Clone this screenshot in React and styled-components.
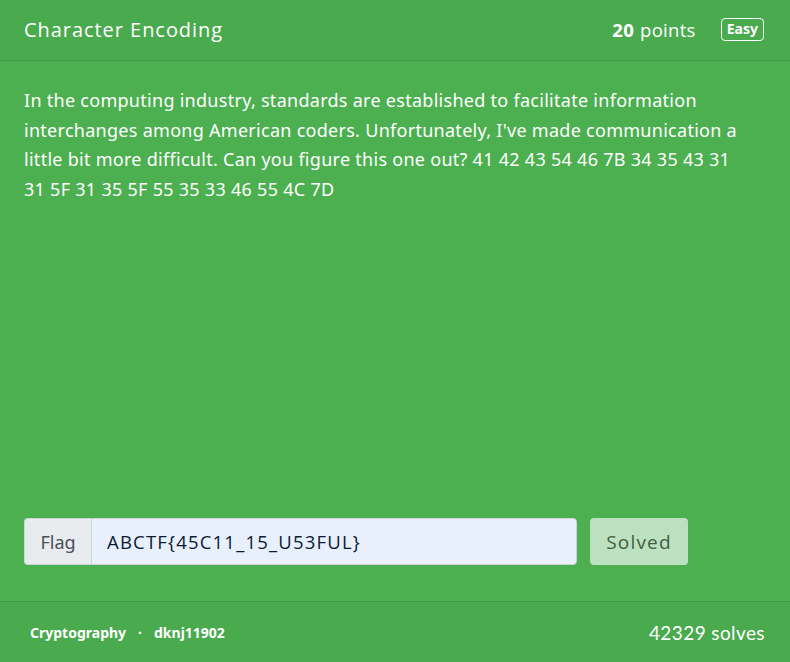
import React from "react";
import styled, { createGlobalStyle } from "styled-components";

const GlobalStyle = createGlobalStyle`
  html, body {
    margin: 0;
    padding: 0;
    background: #4caf50;
  }
  * {
    box-sizing: border-box;
  }
`;

const Card = styled.div`
  display: flex;
  flex-direction: column;
  width: 790px;
  height: 662px;
  background-color: #4caf50;
  color: #fff;
`;

const CardHeader = styled.div`
  display: flex;
  align-items: center;
  justify-content: space-between;
  height: 61px;
  padding: 0 26px 1px 24px;
  background-color: #4aaa4e;
  border-bottom: 1px solid #429a46;
`;

const Title = styled.div`
  font-family: "Open Sans", sans-serif;
  font-size: 20px;
  letter-spacing: 0.95px;
`;

const Points = styled.div`
  display: flex;
  align-items: center;
  font-family: "Open Sans", sans-serif;
  font-size: 18.5px;
  letter-spacing: 0.3px;
`;

const PointValue = styled.span`
  font-weight: 700;
  margin-right: 6px;
`;

const Badge = styled.span`
  margin-left: 25px;
  padding: 1px 5px 2px;
  border: 1px solid #fff;
  border-radius: 4px;
  font-family: "Noto Sans", sans-serif;
  font-size: 14px;
  font-weight: 700;
  line-height: 18px;
  letter-spacing: 0;
`;

const CardBody = styled.div`
  flex: 1;
  display: flex;
  flex-direction: column;
  padding: 25px 24px 36px;
`;

const Description = styled.p`
  width: 728px;
  margin: 0;
  font-family: "Noto Sans", sans-serif;
  font-size: 18px;
  line-height: 29.5px;
  letter-spacing: 0.28px;
`;

const FlagForm = styled.form`
  display: flex;
  align-items: stretch;
  margin-top: auto;
  gap: 13px;
`;

const InputGroup = styled.div`
  display: flex;
  width: 553px;
  height: 47px;
`;

const Addon = styled.span`
  display: flex;
  align-items: center;
  justify-content: center;
  width: 67px;
  background-color: #e9ecef;
  color: #495057;
  border: 1px solid #ced4da;
  border-right: none;
  border-radius: 4px 0 0 4px;
  font-family: "Noto Sans", sans-serif;
  font-size: 18px;
`;

const FlagInput = styled.input`
  flex: 1;
  min-width: 0;
  padding: 0 15px;
  background-color: #e8f0fe;
  color: #0b1a33;
  border: 1px solid #ced4da;
  border-radius: 0 4px 4px 0;
  font-family: "Open Sans", sans-serif;
  font-size: 18.5px;
  letter-spacing: 1.2px;
  outline: none;
`;

const SubmitButton = styled.button`
  width: 98px;
  height: 47px;
  background-color: #bde0c0;
  color: #3f5e41;
  border: none;
  border-radius: 4px;
  font-family: "Open Sans", sans-serif;
  font-size: 19px;
  letter-spacing: 1.2px;
`;

const CardFooter = styled.div`
  display: flex;
  align-items: center;
  justify-content: space-between;
  height: 61px;
  padding: 0 25px 0 30px;
  background-color: #4aaa4e;
  border-top: 1px solid #429a46;
`;

const Meta = styled.div`
  font-family: "Noto Sans", sans-serif;
  font-size: 14px;
  font-weight: 700;
`;

const Dot = styled.span`
  margin: 0 12px;
`;

const Solves = styled.div`
  font-family: Lato, sans-serif;
  font-size: 19px;
  letter-spacing: 0.4px;
`;

export default function App() {
  return (
    <>
      <GlobalStyle />
      <Card>
        <CardHeader>
          <Title>Character Encoding</Title>
          <Points>
            <PointValue>20</PointValue>
            points
            <Badge>Easy</Badge>
          </Points>
        </CardHeader>
        <CardBody>
          <Description>
            In the computing industry, standards are established to facilitate
            information interchanges among American coders. Unfortunately,
            I've made communication a little bit more difficult. Can you
            figure this one out? 41 42 43 54 46 7B 34 35 43 31 31 5F 31 35 5F
            55 35 33 46 55 4C 7D
          </Description>
          <FlagForm onSubmit={(e) => e.preventDefault()}>
            <InputGroup>
              <Addon>Flag</Addon>
              <FlagInput defaultValue="ABCTF{45C11_15_U53FUL}" />
            </InputGroup>
            <SubmitButton type="submit" disabled>
              Solved
            </SubmitButton>
          </FlagForm>
        </CardBody>
        <CardFooter>
          <Meta>
            Cryptography<Dot>·</Dot>dknj11902
          </Meta>
          <Solves>42329 solves</Solves>
        </CardFooter>
      </Card>
    </>
  );
}
